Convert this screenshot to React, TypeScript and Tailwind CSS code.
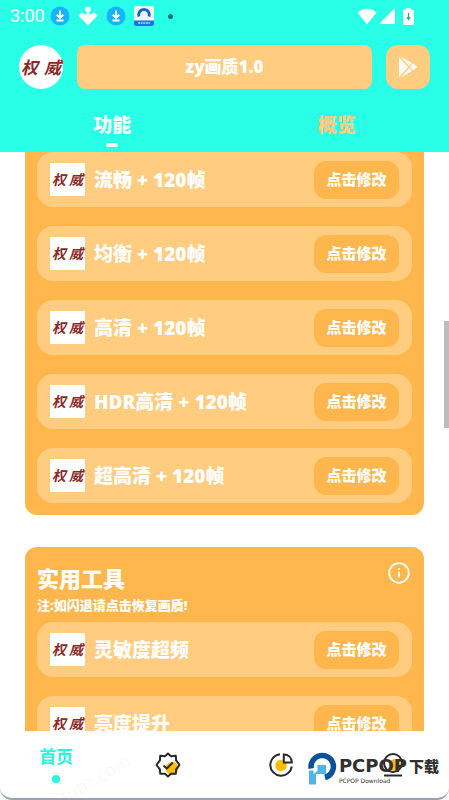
import { useState } from 'react';

const LEVELS = ['流畅 + 120帧', '均衡 + 120帧', '高清 + 120帧', 'HDR高清 + 120帧', '超高清 + 120帧'];
const TOOLS = ['灵敏度超频', '亮度提升'];

function Seal({ round = false }: { round?: boolean }) {
  return (
    <div className={`flex shrink-0 items-center justify-between bg-white px-0.5 font-bold leading-none text-[#8a2a28] ${round ? 'size-11 rounded-full text-[17px]' : 'h-[33px] w-[35px] text-sm'}`}>
      <span className="italic">权</span>
      <span className="italic">威</span>
    </div>
  );
}

function Row({ label }: { label: string }) {
  return (
    <li className="flex h-[55px] items-center rounded-2xl bg-[#ffcc80] px-[13px]">
      <Seal />
      <span className="ml-[9px] flex-1 whitespace-nowrap text-[19px] font-black leading-6">{label}</span>
      <button type="button" className="h-[38px] w-[85px] shrink-0 rounded-xl bg-[#ffb74d] text-[15px] font-black">点击修改</button>
    </li>
  );
}

function DownloadBadge() {
  return (
    <svg viewBox="0 0 20 20" className="size-5">
      <circle cx="10" cy="10" r="9.5" fill="#16b4ff" />
      <path d="M10 4.5v7M6.8 8.8l3.2 3.2 3.2-3.2M6.5 14.5h7" fill="none" stroke="#fff" strokeWidth="2" />
    </svg>
  );
}

function StatusBar() {
  return (
    <div className="flex h-8 items-center pl-2.5 pr-[35px]">
      <span className="w-10 font-[Roboto] text-lg leading-5">3:00</span>
      <div className="flex items-center gap-2">
        <DownloadBadge />
        <svg viewBox="0 0 20 20" className="size-5" fill="#fff">
          <circle cx="10" cy="3.2" r="2.8" />
          <path d="M8.500 6h3v3l4.700-2.500 3.500 3L10 19.500.3 9.500l3.500-3L8.500 9z" />
        </svg>
        <DownloadBadge />
        <svg viewBox="0 0 20 20" className="size-5">
          <rect width="20" height="20" rx="2" fill="#eef6ff" />
          <path d="M5 10.500A5.300 5.300 0 1 1 15 10.500" fill="none" stroke="#1464c8" strokeWidth="2.800" />
          <path d="M0 14.500h20V18a2 2 0 0 1-2 2H2a2 2 0 0 1-2-2z" fill="#1673e8" />
          <path d="M4 17h12" stroke="#b8dcff" strokeWidth="1.500" strokeDasharray="2 .6" />
        </svg>
      </div>
      <span className="ml-3.5 size-[5px] rounded-full bg-[#12766f]" />
      <div className="ml-auto flex items-center gap-0.5">
        <svg viewBox="0 0 20 17" className="h-[17px] w-5" fill="#fff">
          <path d="M.5 4.500C6-.6 14-.6 19.500 4.500L10 16.500z" />
        </svg>
        <svg viewBox="0 0 16 16" className="size-4" fill="#fff">
          <path d="M16 0v16H0z" />
        </svg>
        <svg viewBox="0 0 11 17" className="ml-1.5 h-[17px] w-[11px]">
          <path d="M3 0h5v1.500h1.500A1.500 1.500 0 0 1 11 3v12.500A1.500 1.500 0 0 1 9.500 17h-8A1.500 1.500 0 0 1 0 15.500V3a1.500 1.500 0 0 1 1.500-1.500H3z" fill="#fff" />
          <path d="M5.500 5v6M3.800 9l1.700 2.500L7.200 9" fill="none" stroke="#20a99b" strokeWidth="1.200" />
        </svg>
      </div>
    </div>
  );
}

function BottomNav() {
  return (
    <nav className="grid h-[69px] shrink-0 grid-cols-4 justify-items-center rounded-b-xl border-b-2 border-gray-400 bg-white">
      <a href="#home" className="flex flex-col items-center gap-1.5 pt-3.5 text-[#29f5de]">
        <span className="text-[17px] font-bold leading-6">首页</span>
        <span className="size-2 rounded-full bg-[#29f5de]" />
      </a>
      <a href="#verify" aria-label="认证" className="self-center">
        <svg viewBox="0 0 26 26" className="size-[26px]" fill="none" stroke="#29292b" strokeWidth="2" strokeLinejoin="round">
          <circle cx="17" cy="16.500" r="6.500" fill="#ffbd08" stroke="none" />
          <path d="M13 1.500l3 2.700 4.800-.5.300 4.700 3.400 4.600-3.400 4.300-.3 4.500-4.800-.1-3 2.800-3-2.800-4.800.1-.3-4.500L1.500 13l3.400-4.600.3-4.700 4.800.5z" />
          <path d="M8.500 13.500l3.300 3 6-6" />
        </svg>
      </a>
      <a href="#stats" aria-label="统计" className="self-center">
        <svg viewBox="0 0 26 26" className="size-[26px]" fill="none" stroke="#29292b" strokeWidth="2">
          <circle cx="13" cy="13.500" r="5.800" fill="#ffbd08" stroke="none" />
          <path d="M12 2.200A10.800 10.800 0 1 0 23.800 14.500" />
          <path d="M15.800 2.500v8h8C23.800 5.500 20.500 2.500 15.800 2.500z" fill="#fff" />
        </svg>
      </a>
      <a href="#mine" aria-label="我的" className="self-center">
        <svg viewBox="0 0 26 26" className="size-[26px]" fill="none" stroke="#29292b" strokeWidth="2">
          <circle cx="15" cy="13" r="6" fill="#ffbd08" stroke="none" />
          <circle cx="13" cy="11" r="9" />
          <path d="M4 23.500h18" />
        </svg>
      </a>
    </nav>
  );
}

function Brand() {
  return (
    <div className="absolute bottom-3.5 right-2.5 flex items-end gap-0.5 text-[#303030]">
      <svg viewBox="0 0 29 34" className="h-[34px] w-[29px]">
        <path d="M3.200 16.500A11.200 11.200 0 1 1 17 25.500" fill="none" stroke="#07529b" strokeWidth="5.500" />
        <path d="M9.500 13H18v9H9.500zM1 18.500h4.500V22H8v10.500H1zM5.500 22h4v-3z" fill="#50b4e8" />
      </svg>
      <div className="flex flex-col">
        <div className="flex items-center gap-0.5 whitespace-nowrap leading-5">
          <span className="font-['DejaVu_Sans'] text-lg font-bold leading-5">PCPOP</span>
          <span className="text-[15px] font-black leading-5">下载</span>
        </div>
        <span className="font-['DejaVu_Sans'] text-[6px] leading-[10px]">PCPOP Download</span>
      </div>
    </div>
  );
}

export default function App() {
  const [tab, setTab] = useState('功能');
  return (
    <div className="relative flex h-screen flex-col overflow-hidden bg-white font-['Noto_Sans','Noto_Sans_CJK_SC',sans-serif] text-white">
      <header className="shrink-0 bg-[#29ffe6]">
        <StatusBar />
        <div className="flex items-center gap-3.5 px-[19px] pt-[13px]">
          <Seal round />
          <div className="flex h-11 flex-1 items-center justify-center rounded-lg bg-[#ffcc80] text-[17px] font-black">zy画质1.0</div>
          <button type="button" aria-label="启动" className="flex size-11 items-center justify-center rounded-xl bg-[#ffcc80]">
            <svg viewBox="0 0 20 22" className="h-[22px] w-5" fill="#fff">
              <path d="M1 1v20l9-10z" />
              <path d="M3 .5l11 6.500-3 3zM3 21.500l11-6.500-3-3zM15 7.500l4.500 3.500-4.500 3.500-3.200-3.500z" />
            </svg>
          </button>
        </div>
        <div role="tablist" className="grid h-[63px] grid-cols-2">
          {['功能', '概览'].map(t => (
            <button key={t} type="button" role="tab" aria-selected={tab === t} onClick={() => setTab(t)} className={`flex flex-col items-center gap-1.5 pt-6 text-[19px] font-black leading-6 ${tab === t ? 'text-white' : 'text-[#ffcc80]'}`}>
              {t}
              {tab === t && <span className="h-1 w-3 rounded-full bg-white" />}
            </button>
          ))}
        </div>
      </header>
      <main className="min-h-0 flex-1 overflow-hidden px-[25px]">
        <ul className="flex flex-col gap-[19px] rounded-b-xl bg-[#ffb74d] px-3 pb-3">
          {LEVELS.map(l => <Row key={l} label={l} />)}
        </ul>
        <section className="mt-8 rounded-xl bg-[#ffb74d] px-3 pb-3 pt-[15px]">
          <div className="flex items-start justify-between pr-0.5">
            <h2 className="text-[22px] font-black leading-8">实用工具</h2>
            <svg viewBox="0 0 22 22" className="size-[22px]" fill="none" stroke="#fff" strokeWidth="1.800">
              <circle cx="11" cy="11" r="9.800" />
              <path d="M11 9.500v6M11 6v1.800" />
            </svg>
          </div>
          <p className="text-[13px] font-black leading-[22px]">注:如闪退请点击恢复画质!</p>
          <ul className="mt-1.5 flex flex-col gap-[19px]">
            {TOOLS.map(t => <Row key={t} label={t} />)}
          </ul>
        </section>
      </main>
      <BottomNav />
      <div className="absolute right-0 top-[321px] h-[107px] w-[5px] bg-[#bdbdbd]" />
      <Brand />
      <span className="pointer-events-none absolute bottom-3 left-14 -rotate-30 text-lg leading-5 text-black/4">funz.com</span>
    </div>
  );
}
